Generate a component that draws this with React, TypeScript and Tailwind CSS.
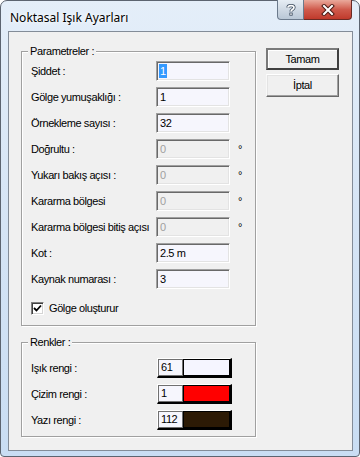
import React from "react";

const params = [
  { label: "Şiddet :", value: "1", selected: true },
  { label: "Gölge yumuşaklığı :", value: "1" },
  { label: "Örnekleme sayısı :", value: "32" },
  { label: "Doğrultu  :", value: "0", disabled: true },
  { label: "Yukarı bakış açısı :", value: "0", disabled: true },
  { label: "Kararma bölgesi", value: "0", disabled: true },
  { label: "Kararma bölgesi bitiş açısı", value: "0", disabled: true },
  { label: "Kot :", value: "2.5 m" },
  { label: "Kaynak numarası :", value: "3" },
];

const colors = [
  { label: "Işık rengi :", num: "61", color: "#f5f5ff" },
  { label: "Çizim rengi :", num: "1", color: "#ff0000" },
  { label: "Yazı rengi :", num: "112", color: "#2c1a05" },
];

function Field({ value, disabled, selected }: { value: string; disabled?: boolean; selected?: boolean }) {
  return (
    <div
      className={`w-[74px] h-[20px] flex items-center pl-[2px] border border-t-[#a0a0a0] border-l-[#a0a0a0] border-b-white border-r-white shadow-[inset_1px_1px_0_#696969,inset_-1px_-1px_0_#e3e3e3] ${
        disabled ? "bg-[#f0f0f0] text-[#a0a0a0]" : "bg-[#f6f6fd] text-black"
      }`}
    >
      {selected ? (
        <span className="bg-[#3399ff] text-white px-[1px] leading-[14px]">{value}</span>
      ) : (
        <span className="px-[1px]">{value}</span>
      )}
    </div>
  );
}

function GroupBox({ title, className, children }: { title: string; className?: string; children: React.ReactNode }) {
  return (
    <div className={`relative border border-[#a0a0a0] shadow-[1px_1px_0_white,inset_1px_1px_0_white] ${className ?? ""}`}>
      <span className="absolute -top-[8px] left-[6px] bg-[#f0f0f0] px-[2px] leading-[14px]">{title}</span>
      {children}
    </div>
  );
}

export default function App() {
  return (
    <div className="w-[360px] h-[457px] bg-white">
      <div
        className="relative w-[360px] h-[457px] rounded-t-[7px] rounded-b-[4px] border border-[#5c6470] bg-gradient-to-b from-[#e4eef9] via-[#d5e4f5] to-[#c9ddf3] pt-[30px] px-[7px] pb-[6px]"
        style={{ fontFamily: '"Liberation Sans", Arial, sans-serif' }}
      >
        {/* title bar */}
        <div
          className="absolute top-[8px] left-[9px] text-[12px] text-black"
          style={{ fontFamily: '"Noto Sans", "Open Sans", sans-serif', textShadow: "0 0 6px #fff, 0 0 3px #fff" }}
        >
          Noktasal Işık Ayarları
        </div>
        <div className="absolute top-[-1px] right-[7px] flex">
          <div className="w-[27px] h-[20px] rounded-bl-[4px] border border-[#6b7a8c] border-t-0 bg-gradient-to-b from-[#e6edf4] via-[#cfd9e4] to-[#b9c7d6] flex items-center justify-center">
            <svg width="10" height="12" viewBox="0 0 10 12">
              <path d="M2 3.5 C2 1 8 1 8 3.5 C8 5.5 5 5.5 5 7.5" fill="none" stroke="#3a4a5c" strokeWidth="3.2" />
              <path d="M2 3.5 C2 1 8 1 8 3.5 C8 5.5 5 5.5 5 7.5" fill="none" stroke="#fff" strokeWidth="1.6" />
              <rect x="3.4" y="8.6" width="3.2" height="3" fill="#3a4a5c" />
              <rect x="4.2" y="9.4" width="1.6" height="1.4" fill="#fff" />
            </svg>
          </div>
          <div className="w-[48px] h-[20px] rounded-br-[4px] border border-l-0 border-t-0 border-[#6b2a24] bg-gradient-to-b from-[#e9a99c] via-[#cf5a4c] to-[#c0392b] flex items-center justify-center">
            <svg width="14" height="12" viewBox="0 0 14 12">
              <path d="M3 2 L11 10 M11 2 L3 10" stroke="#4a1a14" strokeWidth="4" strokeLinecap="square" />
              <path d="M3 2 L11 10 M11 2 L3 10" stroke="#fff" strokeWidth="2" strokeLinecap="square" />
            </svg>
          </div>
        </div>

        {/* client area */}
        <div className="w-[345px] h-[420px] border border-[#838c98] bg-[#f0f0f0] text-[11px] tracking-[-0.4px] text-black pl-[12px] pt-[19px]">
          <div className="flex gap-[10px]">
            <div className="flex flex-col gap-[16px] w-[235px]">
              <GroupBox title="Parametreler :" className="h-[275px] pt-[9px] pl-[9px]">
                <div className="flex flex-col gap-[6px]">
                  {params.map((p, i) => (
                    <div key={i} className="flex items-center h-[20px]">
                      <span className="w-[125px] whitespace-nowrap">{p.label}</span>
                      <Field value={p.value} disabled={p.disabled} selected={p.selected} />
                      {p.disabled && <span className="self-start ml-[8px] mt-[3px] text-[11px] leading-[14px]">°</span>}
                    </div>
                  ))}
                </div>
                <div className="flex items-center gap-[5px] mt-[11px]">
                  <div className="w-[13px] h-[13px] bg-white border border-t-[#808080] border-l-[#808080] border-b-white border-r-white shadow-[inset_1px_1px_0_#404040,inset_-1px_-1px_0_#d4d4d4] flex items-center justify-center">
                    <svg width="9" height="9" viewBox="0 0 9 9">
                      <path d="M1 4 L3.5 6.5 L8 1.5" fill="none" stroke="#000" strokeWidth="1.8" />
                    </svg>
                  </div>
                  <span>Gölge oluşturur</span>
                </div>
              </GroupBox>
              <GroupBox title="Renkler :" className="h-[95px] pt-[15px] pl-[9px]">
                <div className="flex flex-col gap-[6px]">
                  {colors.map((c, i) => (
                    <div key={i} className="flex items-center h-[20px]">
                      <span className="w-[126px] whitespace-nowrap">{c.label}</span>
                      <div className="flex w-[75px] h-[20px] border border-t-white border-l-white border-r-[2px] border-b-[2px] border-r-black border-b-black">
                        <div className="w-[25px] h-full border border-[#707070] bg-[#f6f6fd] flex items-center pl-[2px]">
                          {c.num}
                        </div>
                        <div className="flex-1 h-full border border-black" style={{ backgroundColor: c.color }} />
                      </div>
                    </div>
                  ))}
                </div>
              </GroupBox>
            </div>
            <div className="flex flex-col gap-[4px] w-[73px] -mt-[3px]">
              <div className="h-[22px] flex items-center justify-center border-2 border-[#7a7a7a] border-b-[#404040] border-r-[#404040] shadow-[inset_1px_1px_0_white] bg-[#f0f0f0]">
                Tamam
              </div>
              <div className="h-[23px] flex items-center justify-center border border-t-white border-l-[#f8f8f8] border-b-[#696969] border-r-[#696969] shadow-[inset_-1px_-1px_0_#a0a0a0,inset_1px_1px_0_#e3e3e3] bg-[#f0f0f0]">
                İptal
              </div>
            </div>
          </div>
        </div>
      </div>
    </div>
  );
}
